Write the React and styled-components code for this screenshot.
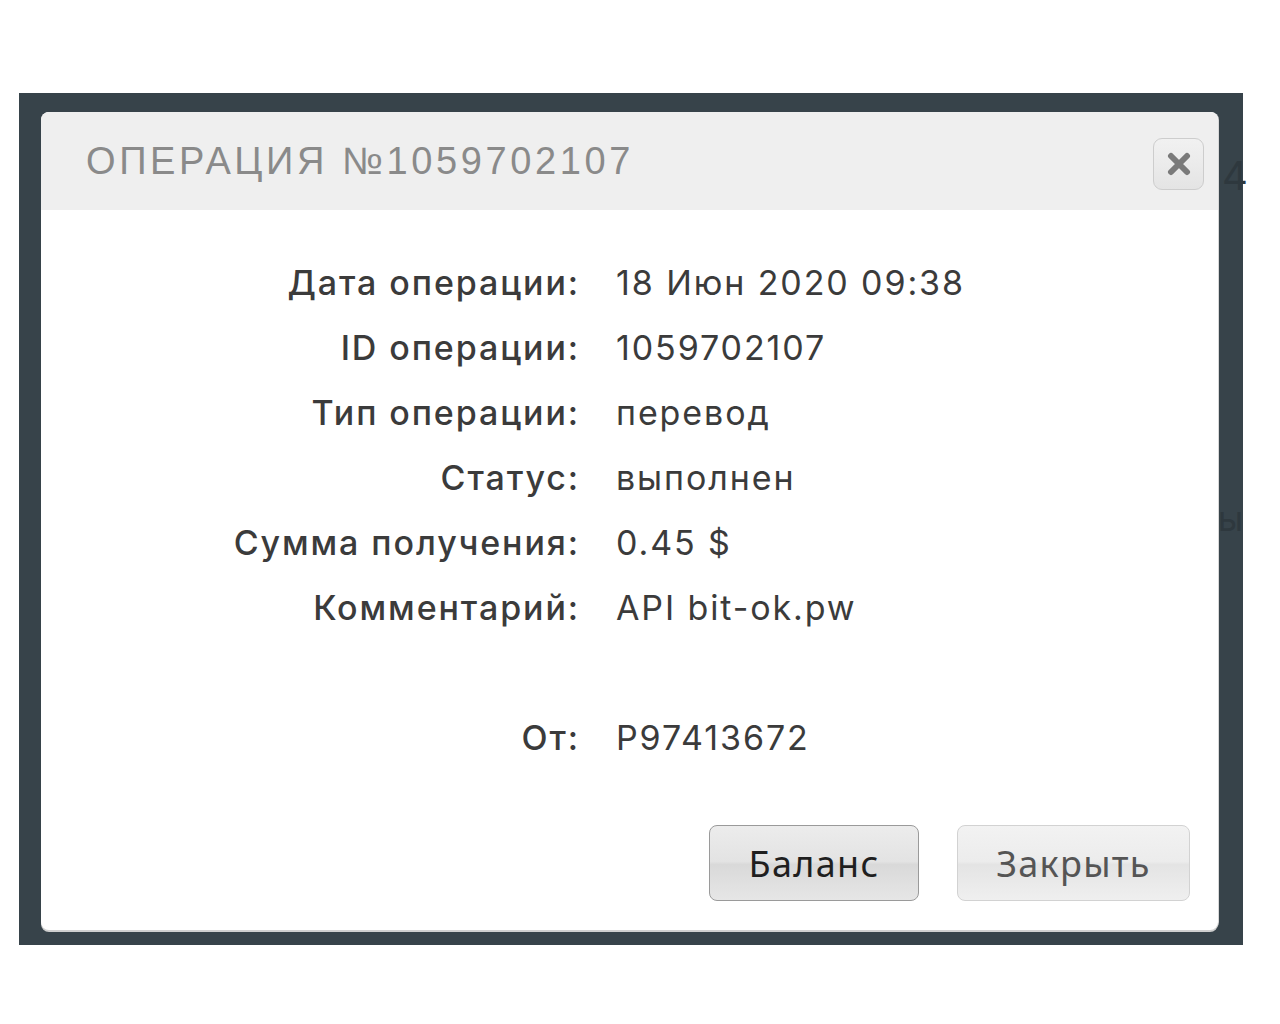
import React from "react";
import styled, { createGlobalStyle } from "styled-components";

const GlobalStyle = createGlobalStyle`
    html, body {
        margin: 0;
        padding: 0;
        background: #ffffff;
    }
`

const Page = styled.div`
    width: 1280px;
    height: 1024px;
    padding: 93px 0 0 19px;
    box-sizing: border-box;
`
const Backdrop = styled.div`
    position: relative;
    width: 1224px;
    height: 852px;
    background: #37434a;
    padding: 19px 25px 0 22px;
    box-sizing: border-box;
`
const GhostText = styled.span`
    position: absolute;
    left: ${p => p.left}px;
    top: ${p => p.top}px;
    font-family: "Inter", sans-serif;
    font-size: ${p => p.size}px;
    color: #2e383e;
`
const Modal = styled.div`
    position: relative;
    height: 818px;
    background: #ffffff;
    border-radius: 8px;
    box-shadow: 0 2px 0 #cfcfcf, 1px 0 0 #d8d8d8;
    display: flex;
    flex-direction: column;
    overflow: hidden;
`
    const Header = styled.div`
        height: 98px;
        background: #efefef;
        display: flex;
        align-items: center;
        justify-content: space-between;
        padding: 0 14px 0 45px;
    `
    const Title = styled.h1`
        margin: 0;
        font-family: "Liberation Sans", sans-serif;
        font-weight: 400;
        font-size: 38px;
        letter-spacing: 3.6px;
        text-transform: uppercase;
        color: #8a8a8a;
    `
    const CloseButton = styled.button`
        width: 51px;
        height: 52px;
        border: 1.5px solid #cdcdcd;
        border-radius: 9px;
        background: linear-gradient(#f1f1f1 0%, #ebebeb 50%, #e4e4e4 100%);
        display: flex;
        align-items: center;
        justify-content: center;
        padding: 0;
        margin-top: 6px;
    `
    const Body = styled.div`
        flex: 1;
        display: flex;
        flex-direction: column;
        padding: 40px 28px 29px 0;
    `
    const Details = styled.div`
        display: grid;
        grid-template-columns: 539px 1fr;
        column-gap: 36px;
        grid-auto-rows: 65px;
        align-items: center;
        font-family: "Inter", "DejaVu Sans", sans-serif;
        font-size: 34px;
        letter-spacing: 1.9px;
    `
    const Label = styled.div`
        text-align: right;
        font-weight: 500;
        color: #3b3b3b;
        grid-row-start: ${p => p.row || "auto"};
    `
    const Value = styled.div`
        font-weight: 400;
        color: #3b3b3b;
        grid-row-start: ${p => p.row || "auto"};
    `
    const Actions = styled.div`
        margin-top: auto;
        display: flex;
        justify-content: flex-end;
        gap: 38px;
    `
    const Button = styled.button`
        width: ${p => p.w}px;
        height: 76px;
        border-radius: 8px;
        font-family: "Noto Sans", "Open Sans", sans-serif;
        font-size: 36px;
        letter-spacing: 1.3px;
        padding: 0;
        color: ${p => p.primary ? "#1f1f1f" : "#555555"};
        border: 1.5px solid ${p => p.primary ? "#9a9a9a" : "#d2d2d2"};
        background: ${p => p.primary
            ? "linear-gradient(#ececec 0%, #e3e3e3 48%, #d9d9d9 52%, #e6e6e6 100%)"
            : "linear-gradient(#f2f2f2 0%, #ececec 48%, #e4e4e4 52%, #efefef 100%)"};
    `

const rows = [
    ["Дата операции:", "18 Июн 2020 09:38"],
    ["ID операции:", "1059702107"],
    ["Тип операции:", "перевод"],
    ["Статус:", "выполнен"],
    ["Сумма получения:", "0.45 $"],
    ["Комментарий:", "API bit-ok.pw"],
];

export default function App(){

    return(
        <>
            <GlobalStyle/>
            <Page>
                <Backdrop>
                    <GhostText left={1203} top={58} size={40}>4</GhostText>
                    <GhostText left={1199} top={405} size={34}>ы</GhostText>
                    <Modal>
                        <Header>
                            <Title>Операция №1059702107</Title>
                            <CloseButton aria-label="close">
                                <svg width="24" height="24" viewBox="0 0 24 24">
                                    <path d="M4 4 L20 20 M20 4 L4 20" stroke="#7a7a7a" strokeWidth="6" strokeLinecap="round"/>
                                </svg>
                            </CloseButton>
                        </Header>
                        <Body>
                            <Details>
                                {rows.map(([l, v]) => (
                                    <React.Fragment key={l}>
                                        <Label>{l}</Label>
                                        <Value>{v}</Value>
                                    </React.Fragment>
                                ))}
                                <Label row={8}>От:</Label>
                                <Value row={8}>P97413672</Value>
                            </Details>
                            <Actions>
                                <Button primary w={210}>Баланс</Button>
                                <Button w={233}>Закрыть</Button>
                            </Actions>
                        </Body>
                    </Modal>
                </Backdrop>
            </Page>
        </>
    )
}
